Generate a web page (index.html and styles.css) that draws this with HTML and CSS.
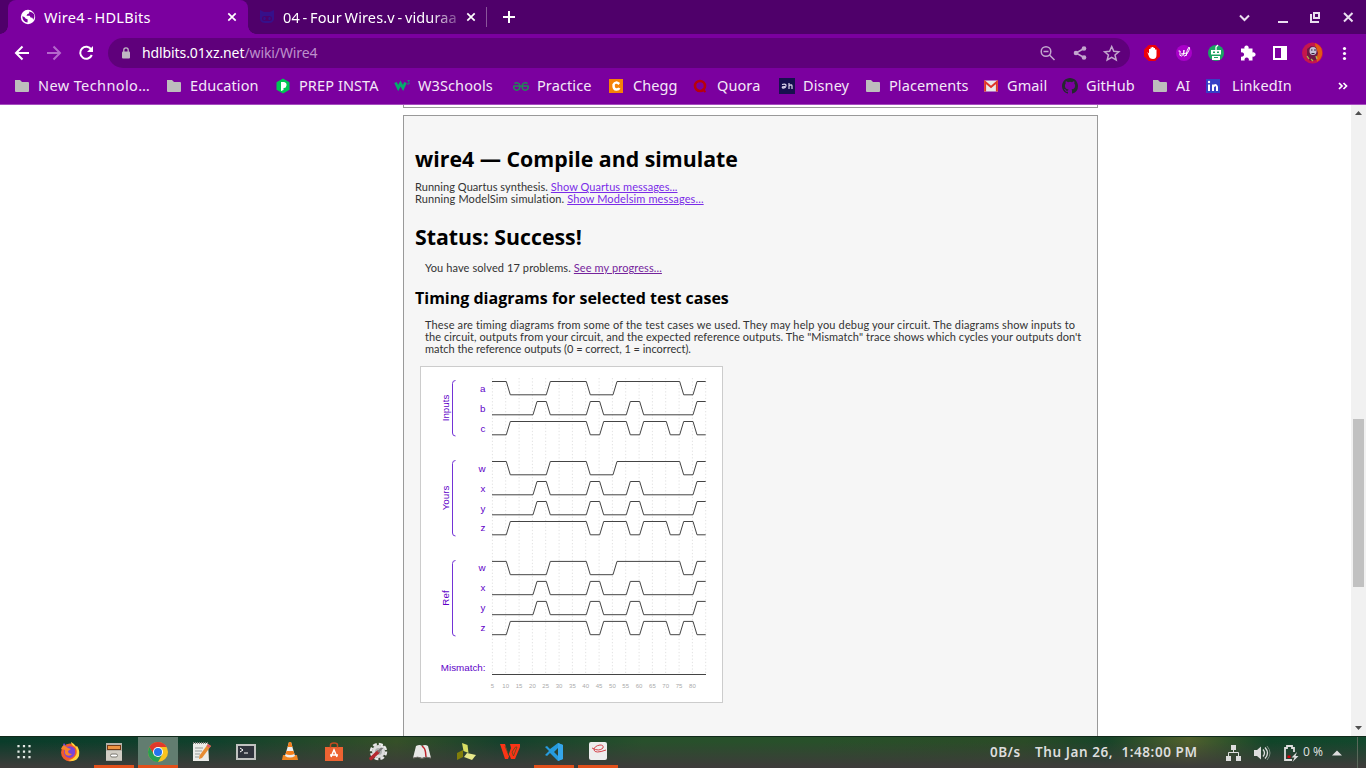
FILE: index.html
```html
<!DOCTYPE html>
<html lang="en">
<head>
<meta charset="utf-8">
<title>Wire4 - HDLBits</title>
<link rel="stylesheet" href="styles.css">
</head>
<body>
<svg width="0" height="0" class="defs">
  <defs>
    <symbol id="folder" viewBox="0 0 16 16"><path d="M1 2h5l2 2h6q1 0 1 1v8q0 1-1 1H2q-1 0-1-1z" fill="#bdbdbd"/></symbol>
    <symbol id="close" viewBox="0 0 10 10"><path d="M1.300 1.300l7.400 7.400M8.700 1.300L1.300 8.700" stroke="#fff" stroke-width="1.700"/></symbol>
    <path id="sigA" d="M0 0H14.300L18.300 13.300H54.300L58.300 0H94.300L98.300 13.300H121L125 0H187.700L191.700 13.300H201L205 0H213.700"/>
    <path id="sigB" d="M0 13.300H41L45 0H54.300L58.300 13.300H94.300L98.300 0H107.700L111.700 13.300H134.300L138.300 0H147.700L151.700 13.300H201L205 0H213.700"/>
    <path id="sigC" d="M0 13.300H14.300L18.300 0H94.300L98.300 13.300H107.700L111.700 0H134.300L138.300 13.300H147.700L151.700 0H174.300L178.300 13.300H187.700L191.700 0H201L205 13.300H213.700"/>
  </defs>
</svg>
<div class="screen">
  <header class="tabs">
    <div class="tab active">
      <svg class="favicon" viewBox="0 0 16 16"><circle cx="8" cy="8" r="7.200" fill="#fff"/><path d="M2.200 7.200q2.800.5 3.300 2.200 1.400.2 2.200 1.200l-.2 2.900Q2.800 13 2.200 7.200zM9.200 2.500v1.700l-2 1-.7 1.600h3.200l.9 1.700 1.800.2.9 2q1.800-2.600.8-5.400Q12.800 2.900 9.200 2.500z" fill="#7b009f"/></svg>
      <span class="tabtitle t1">Wire4 - HDLBits</span>
      <svg class="x" viewBox="0 0 10 10"><use href="#close"/></svg>
    </div>
    <div class="tab">
      <svg class="favicon" viewBox="0 0 16 16"><path d="M1 1l4 2h6l4-2v5q1 8-5 8H6Q0 14 1 6z" fill="#36108a"/><rect x="3" y="7" width="10" height="5" rx="2.500" fill="#4c006c"/><ellipse cx="5.500" cy="9.500" rx="1.200" ry="1.800" fill="#36108a"/><ellipse cx="10.500" cy="9.500" rx="1.200" ry="1.800" fill="#36108a"/></svg>
      <span class="tabtitle t2">04 - Four Wires.v - viduraa</span>
      <svg class="x" viewBox="0 0 10 10"><use href="#close"/></svg>
    </div>
    <svg class="plus" viewBox="0 0 12 12"><path d="M6 0v12M0 6h12" stroke="#fff" stroke-width="2"/></svg>
    <svg class="winbtns" viewBox="0 0 120 20"><g fill="none" stroke="#eadff0" stroke-width="2"><path d="M5 6.500l4.500 4.500L14 6.500"/><path d="M43 13h10"/><path d="M79 4h5v5h-5zM76 5v8h8"/><path d="M109 4l8.500 8.500m0-8.500L109 12.500"/></g></svg>
  </header>
  <nav class="toolbar">
    <svg class="navbtns" viewBox="0 0 100 30"><g fill="none" stroke-width="2"><path d="M29 15H16m6.500-6.500L16 15l6.500 6.500" stroke="#fff"/><path d="M47 15h13m-6.500-6.500L60 15l-6.500 6.500" stroke="#b568cc"/><path d="M91.300 11.500A6 6 0 1 0 91.800 17" stroke="#fff"/></g><path d="M93 8v6h-6z" fill="#fff"/></svg>
    <div class="omnibox">
      <svg class="lock" viewBox="0 0 10 14"><rect x="1" y="5.500" width="8" height="7" rx="1" fill="#bfb6c3"/><path d="M2.800 6V4a2.200 2.200 0 0 1 4.400 0v2" fill="none" stroke="#bfb6c3" stroke-width="1.300"/></svg>
      <span class="url">hdlbits.01xz.net<i>/wiki/Wire4</i></span>
      <svg class="omniicons" viewBox="0 0 86 20"><g fill="none" stroke="#c3a6ce" stroke-width="1.500"><circle cx="8" cy="8.500" r="4.800"/><path d="M11.500 12l5 5M5.500 8.500h5"/><path d="M46 5.500l-8 4.500 8 4.500"/><path d="M73.700 3.500l2.100 4.700 5 .5-3.800 3.300 1.200 5-4.500-2.700-4.500 2.700 1.200-5-3.800-3.300 5-.5z"/></g><g fill="#c3a6ce"><circle cx="46" cy="5.500" r="2.300"/><circle cx="38" cy="10" r="2.300"/><circle cx="46" cy="14.500" r="2.300"/></g></svg>
    </div>
    <svg class="exts" viewBox="1130 38 236 30">
      <path d="M1148.700 45h6.600l4.700 4.700v6.600l-4.700 4.700h-6.600l-4.700-4.700v-6.600z" fill="#ed0008"/><path d="M1147.300 52l1.700 1.500V49h1.500v-1.500h1.500V47h1.500v1h1.500v1.500h1.500V55q0 4-3.500 4t-4.200-3z" fill="#fff"/>
      <circle cx="1184" cy="53" r="8" fill="#a900c9"/><path d="M1178.500 51q2.500-1 1.500 2t1.500 3q3-1 2.500-6-1 6 .5 6t3-3q3-5 1.500-6-2 2-3 9M1181 54l6-1" fill="none" stroke="#fff" stroke-width="1"/>
      <circle cx="1216" cy="53" r="8" fill="#1ba463"/><path d="M1211 50h10v4.500h-10zM1212 56h8v4h-8z" fill="#fff"/><path d="M1216 50v-3l2-2" fill="none" stroke="#fff" stroke-width="1.300"/><path d="M1213 51.500h2v1.500h-2zm4 0h2v1.500h-2zM1214 57h4v1h-4z" fill="#1ba463"/>
      <path d="M1241 48.500h3.500a2.200 2.200 0 1 1 4 0h4v4a2.200 2.200 0 1 1 0 4v4h-3.800a2.200 2.200 0 1 0-4 0H1241v-4a2.200 2.200 0 1 0 0-4z" fill="#fff"/>
      <rect x="1274" y="47" width="12" height="12" fill="none" stroke="#fff" stroke-width="2"/><path d="M1281 46h6v14h-6z" fill="#fff"/>
      <circle cx="1312.500" cy="53" r="10.500" fill="#c5164d"/><path d="M1315 43q8 3 7 12-1 4-5 7z" fill="#e15a16"/><path d="M1307 49l4-3 5 1 2 6-2 7-6 1-3-5z" fill="#6f1746"/><ellipse cx="1313" cy="51" rx="3.500" ry="4" fill="#c7c1d6"/><path d="M1311 50h1.500m1.500 0h2M1311.500 53.500h3" stroke="#32213b" stroke-width="1.200"/><path d="M1307 56l2 3m2 0l2 2m3-5l1 3" stroke="#a9b94b" stroke-width="1.300"/>
      <g fill="#fff"><circle cx="1344.500" cy="48.500" r="1.600"/><circle cx="1344.500" cy="53.500" r="1.600"/><circle cx="1344.500" cy="58.500" r="1.600"/></g>
    </svg>
  </nav>
  <nav class="bookmarks">
    <a><svg viewBox="0 0 16 16"><use href="#folder"/></svg><span class="wide">New Technolo…</span></a>
    <a><svg viewBox="0 0 16 16"><use href="#folder"/></svg><span>Education</span></a>
    <a><svg viewBox="0 0 16 16"><path d="M8 .5l6.500 3.700v7.600L8 15.500l-6.500-3.700V4.200z" fill="#00c653"/><path d="M6 4h3q3 .5 2.500 3.500T8.500 10v2L6 13z" fill="#fff"/></svg><span>PREP INSTA</span></a>
    <a><svg viewBox="0 0 16 16"><path d="M1.500 4.500l2.700 5.500 2.300-4.500 2.500 4.500L11.500 4.500" fill="none" stroke="#04aa6d" stroke-width="2.800"/><path d="M13.500 2.500h2L14.300 4q1.700.5.700 2h-2" fill="none" stroke="#04aa6d" stroke-width=".8"/></svg><span>W3Schools</span></a>
    <a><svg viewBox="0 0 16 16"><path d="M.5 8H15.500M6.500 8a3 3 0 1 1-5.500 0M1.500 5.500Q5 3.500 6.800 7M9.500 8a3 3 0 1 0 5.500 0M14.500 5.500Q11 3.500 9.200 7" fill="none" stroke="#218a57" stroke-width="1.500"/></svg><span>Practice</span></a>
    <a><svg viewBox="0 0 16 16"><path d="M0 1h14v14H0z" fill="#f58307"/><path d="M10.300 6Q6.500 3 4.600 6.500q-.5 5 3 5 2 0 2.700-1.500" fill="none" stroke="#fff" stroke-width="2.500"/></svg><span>Chegg</span></a>
    <a><svg viewBox="0 0 16 16"><circle cx="7" cy="8" r="5" fill="none" stroke="#b9000a" stroke-width="2.600"/><path d="M9 11l3.500 3" stroke="#b9000a" stroke-width="2"/></svg><span>Quora</span></a>
    <a><svg viewBox="0 0 16 16"><path d="M0 0h16v16H0z" fill="#17104f"/><path d="M3 6.500q4.500-1 4 1.500T3.500 10q-1-1.500 2.500-1.500M10 5v6m0-3.500q3-1.500 3 .5v3" fill="none" stroke="#ddd7ed" stroke-width="1.200"/></svg><span>Disney</span></a>
    <a><svg viewBox="0 0 16 16"><use href="#folder"/></svg><span>Placements</span></a>
    <a><svg viewBox="0 0 16 16"><path d="M1 2.500h14v11H1z" fill="#e8e8e8"/><path d="M2.100 13.500V4l5.900 5 5.900-5v9.500" fill="none" stroke="#e03528" stroke-width="2"/></svg><span>Gmail</span></a>
    <a><svg viewBox="0 0 16 16"><path fill="#24292e" d="M8 0C3.580 0 0 3.580 0 8c0 3.540 2.290 6.530 5.470 7.590.4.070.55-.17.55-.38 0-.19-.01-.82-.01-1.490-2.010.37-2.530-.49-2.690-.94-.09-.23-.48-.94-.82-1.130-.28-.15-.68-.52-.01-.53.63-.01 1.080.58 1.230.82.72 1.210 1.870.87 2.330.66.070-.52.28-.87.51-1.070-1.780-.2-3.640-.89-3.640-3.950 0-.87.31-1.590.82-2.150-.08-.2-.36-1.020.08-2.120 0 0 .67-.21 2.200.82a7.600 7.600 0 0 1 4 0c1.530-1.040 2.200-.82 2.200-.82.44 1.100.16 1.920.08 2.120.51.56.82 1.270.82 2.150 0 3.070-1.870 3.750-3.650 3.950.29.25.54.73.54 1.480 0 1.070-.01 1.930-.01 2.200 0 .21.15.46.55.38A8 8 0 0 0 16 8c0-4.420-3.580-8-8-8z"/></svg><span>GitHub</span></a>
    <a><svg viewBox="0 0 16 16"><use href="#folder"/></svg><span>AI</span></a>
    <a><svg viewBox="0 0 16 16"><path d="M1 1h14v14H1z" fill="#3640c5"/><path d="M4 6.500V13M8 6.500V13M8 9q3-4 4 0v4" fill="none" stroke="#fff" stroke-width="2"/><circle cx="4" cy="4" r="1.200" fill="#fff"/></svg><span>LinkedIn</span></a>
    <a class="more"><svg viewBox="0 0 16 16"><path d="M3 5l3 3-3 3M7.500 5l3 3-3 3" fill="none" stroke="#fff" stroke-width="1.700"/></svg></a>
  </nav>
  <div class="viewport">
    <main>
      <div class="prevbox"></div>
      <section class="results">
        <h1>wire4 — Compile and simulate</h1>
        <p class="run"><span class="r1">Running Quartus synthesis. <a>Show Quartus messages...</a></span><br><span class="r2">Running ModelSim simulation. <a>Show Modelsim messages...</a></span></p>
        <h1 class="status">Status: Success!</h1>
        <p class="solved"><span class="r3">You have solved 17 problems. <a class="visited">See my progress...</a></span></p>
        <h2>Timing diagrams for selected test cases</h2>
        <p class="about"><span class="r4">These are timing diagrams from some of the test cases we used. They may help you debug your circuit. The diagrams show inputs to</span><br><span class="r5">the circuit, outputs from your circuit, and the expected reference outputs. The "Mismatch" trace shows which cycles your outputs don't</span><br><span class="r6">match the reference outputs (0 = correct, 1 = incorrect).</span></p>
        <div class="diagram">
          <svg width="301" height="335" viewBox="421 367 301 335">
            <path class="grid" d="M492.400 378V674M505.700 378V674M519.100 378V674M532.400 378V674M545.700 378V674M559.100 378V674M572.400 378V674M585.700 378V674M599.100 378V674M612.400 378V674M625.700 378V674M639.100 378V674M652.400 378V674M665.700 378V674M679.100 378V674M692.400 378V674M705.700 378V674"/>
            <g class="sig">
              <use href="#sigA" x="492" y="381.500"/><use href="#sigB" x="492" y="401.500"/><use href="#sigC" x="492" y="421.500"/>
              <use href="#sigA" x="492" y="461.500"/><use href="#sigB" x="492" y="481.500"/><use href="#sigB" x="492" y="501.500"/><use href="#sigC" x="492" y="521.500"/>
              <use href="#sigA" x="492" y="561.400"/><use href="#sigB" x="492" y="581.400"/><use href="#sigB" x="492" y="601.400"/><use href="#sigC" x="492" y="621.400"/>
              <path d="M492 674.500H706"/>
            </g>
            <path class="bracket" d="M455.500 380.500Q452.500 380.500 452.500 383.500V433Q452.500 436 455.500 436M455.500 460.500Q452.500 460.500 452.500 463.500V533Q452.500 536 455.500 536M455.500 560.500Q452.500 560.500 452.500 563.500V633Q452.500 636 455.500 636"/>
            <g class="lab">
              <text x="485.500" y="392">a</text><text x="485.500" y="412">b</text><text x="485.500" y="432">c</text>
              <text x="485.500" y="472">w</text><text x="485.500" y="492">x</text><text x="485.500" y="512">y</text><text x="485.500" y="531">z</text>
              <text x="485.500" y="571">w</text><text x="485.500" y="591">x</text><text x="485.500" y="611">y</text><text x="485.500" y="631">z</text>
              <text x="485.500" y="671">Mismatch:</text>
            </g>
            <g class="side"><text transform="translate(449 408) rotate(-90)">Inputs</text><text transform="translate(449 498) rotate(-90)">Yours</text><text transform="translate(449 598) rotate(-90)">Ref</text></g>
            <g class="ticks"><text x="492.400" y="688">5</text><text x="505.700" y="688">10</text><text x="519.100" y="688">15</text><text x="532.400" y="688">20</text><text x="545.700" y="688">25</text><text x="559.100" y="688">30</text><text x="572.400" y="688">35</text><text x="585.700" y="688">40</text><text x="599.100" y="688">45</text><text x="612.400" y="688">50</text><text x="625.700" y="688">55</text><text x="639.100" y="688">60</text><text x="652.400" y="688">65</text><text x="665.700" y="688">70</text><text x="679.100" y="688">75</text><text x="692.400" y="688">80</text></g>
          </svg>
        </div>
      </section>
    </main>
    <div class="scrollbar">
      <svg viewBox="0 0 15 17"><path d="M4 10l3.500-4L11 10z" fill="#505050"/></svg>
      <div class="thumb"></div>
      <svg viewBox="0 0 15 17"><path d="M4 7l3.500 4L11 7z" fill="#505050"/></svg>
    </div>
  </div>
  <footer class="taskbar">
    <div class="apps">
      <a><svg viewBox="0 0 24 24"><path d="M6.500 5v13.500M12 5v13.500M17.500 5v13.500" stroke="#e4ebe6" stroke-width="2.200" stroke-dasharray="2.200 3.300"/></svg></a>
      <a class="first"><svg viewBox="0 0 24 24"><circle cx="12" cy="12.500" r="9" fill="#f25a2c"/><path d="M13 2q0 3 4 5 3 4 1 8-3 5-8 5 8 3 11-4 1-6-2-10-1 1-1 1-1-3-5-5z" fill="#ffd43b"/><path d="M5 5l1-2 3 4q5-2 8 2 1 8-5 9-6-1-6-6l1-4z" fill="#7a45d6"/><path d="M3 9q1-3 3-4l4 3 3 1-3 2q0 3 4 3-2 3-6 1-2-2-1-5z" fill="#f9842b"/></svg></a>
      <a class="open"><svg viewBox="0 0 24 24"><path d="M4 3h16v18H4z" fill="#b5b2aa"/><path d="M5 5h14v5H5z" fill="#763b15"/><path d="M6 6h12v3H6z" fill="#ee9442"/><path d="M4 11h16v9H4z" fill="#d1cec5"/><rect x="8.500" y="14" width="7" height="3" rx="1.500" fill="#fff" stroke="#79776f"/></svg></a>
      <a class="open focus"><svg viewBox="0 0 24 24"><circle cx="12" cy="12" r="10" fill="#f9c31f"/><path d="M3.340 7A10 10 0 0 1 20.660 7H12L7.700 14.500z" fill="#e0392c"/><path d="M3.340 7A10 10 0 0 0 12 22l4.330-7.500L8 14.500z" fill="#279f52"/><circle cx="12" cy="12" r="5" fill="#fff"/><circle cx="12" cy="12" r="4" fill="#2474ed"/></svg></a>
      <a><svg viewBox="0 0 24 24"><path d="M3 3h15l1 18H3z" fill="#ecece8"/><path d="M3 3h15" stroke="#7d807b" stroke-width="2" stroke-dasharray="1 1"/><path d="M5 8h8M5 11h7M5 14h5M5 17h4" stroke="#979b98"/><path d="M18 4l3 2-9 12-3 1 .5-3.500z" fill="#e78c32"/><path d="M18 4l3 2-1.500 2-3-2z" fill="#dc5a66"/></svg></a>
      <a><svg viewBox="0 0 24 24"><path d="M2 4h20v16H2z" fill="#c0c2c0"/><path d="M4 6h16v12H4z" fill="#30343d"/><path d="M6 8l3 2-3 2M10 13h4" fill="none" stroke="#fff"/></svg></a>
      <a><svg viewBox="0 0 24 24"><path d="M5 15h14l1 5H4z" fill="#ef8420"/><path d="M11 2h2l4 14q-5 3-10 0z" fill="#eee"/><path d="M11 2h2l1.500 5h-5zM8.500 11h7l1 3q-4.500 2-9 0z" fill="#f57e19"/></svg></a>
      <a><svg viewBox="0 0 24 24"><path d="M3 7h18v14H3z" fill="#ed6332"/><path d="M8.500 7.500V5q0-2 3.500-2t3.500 2v2.500" fill="none" stroke="#c44a20" stroke-width="1.500"/><path d="M9 17l3-7 3 7M8 15h8" fill="none" stroke="#fff" stroke-width="1.500"/></svg></a>
      <a><svg viewBox="0 0 24 24"><circle cx="12.500" cy="11.500" r="6.500" fill="#ddd"/><circle cx="12.500" cy="11.500" r="7.500" fill="none" stroke="#e8e8e8" stroke-width="2.500" stroke-dasharray="3.900 2"/><circle cx="12.500" cy="11.500" r="3.500" fill="#adb2b0"/><path d="M5 18.500l7-6.500" stroke="#b52930" stroke-width="3.500" stroke-linecap="round"/><path d="M12 12l6-6" stroke="#777" stroke-width="2"/><path d="M16 4v3h3" fill="none" stroke="#f4f4f4" stroke-width="1.500"/></svg></a>
      <a><svg viewBox="0 0 24 24"><path d="M6 6q4-2 6 0 3-2 6 0l3 12q-5-2-9 0-4-2-9 0z" fill="#e8e8e6"/><path d="M12 6q3 2 3.500 6l.5 5" fill="none" stroke="#bd252b" stroke-width="1.500"/><path d="M3 18q5-2 9 .5 4-2.500 9-.5" fill="none" stroke="#77726d"/></svg></a>
      <a><svg viewBox="0 0 24 24"><path d="M8 3l5.500 2 1 8-5-2z" fill="#d8df63"/><path d="M3 20V13l6-3v7z" fill="#817e0a"/><path d="M13 13l9 2-4 5-8-3z" fill="#e8e98b"/></svg></a>
      <a><svg viewBox="0 0 24 24"><path d="M2 4h5l3.500 11 2.500-7-1-4h10v3L17 19h-4l-1.500-4-1.500 4H7z" fill="#fa3416"/><path d="M17.500 7h1.500l-3.500 9-1.500-4zM7 6l4 10" fill="none" stroke="#40501f" stroke-width=".7"/></svg></a>
      <a class="open"><svg viewBox="0 0 24 24"><path d="M16 3l5 2v14l-5 2-8-8-3 3-2-1 4-4-4-4 2-1 3 3zM16 8l-4 4 4 4z" fill="#269bdd"/><path d="M16 3l5 2v14l-5 2z" fill="#35a6ea"/></svg></a>
      <a class="open"><svg viewBox="0 0 24 24"><rect x="3" y="2" width="18" height="18" rx="2" fill="#eee"/><path d="M6 8q7 4 11 0 1-3-3-3-6 1-6 5 1 4 12 0" fill="none" stroke="#d5434a" stroke-width="1"/></svg></a>
    </div>
    <span class="net">0B/s</span><span class="clock">Thu Jan 26, &nbsp;1:48:00 PM</span>
    <svg class="tray" viewBox="0 0 80 32"><g fill="#ddd"><path d="M9 8h5v5H9zM4 19h5v5H4zM14 19h5v5h-5z"/><path d="M6.500 20v-4.500h10V20m-5-7v3" fill="none" stroke="#ddd"/><path d="M32 13h3l4-3.500v13L35 19h-3z"/></g><path d="M41 12.500q3 3.500 0 7M43 10.500q5 5.500 0 11" fill="none" stroke="#ddd" stroke-width="1.300"/><path d="M45 9q6 7 0 14" fill="none" stroke="#7d8c81"/><path d="M70 23h-7V11h2V9h5v2h2v4" fill="none" stroke="#ddd" stroke-width="1.800"/><path d="M65.500 18.500h3v2.500h-3z" fill="#d9000b"/><path d="M75 15l-5.500 5.500h3l-2 4.500 6-6h-3z" fill="#ddd"/></svg>
    <span class="pct">0 %</span>
    <svg class="up" viewBox="0 0 10 6"><path d="M0 5.500l5-5 5 5z" fill="#ddd"/></svg>
    <div class="desktop"></div>
  </footer>
</div>
</body>
</html>
```
FILE: styles.css
```css
* { box-sizing: border-box; }
body { margin: 0; overflow: hidden; font-family: "Noto Sans", "Open Sans", sans-serif; background: #fff; }
.defs { position: absolute; }
svg { display: block; flex: none; }
span { white-space: nowrap; }
.screen { width: 1366px; height: 768px; display: flex; flex-direction: column; }

.tabs { height: 34px; background: radial-gradient(circle at 0 0, transparent 7.500px, #7b009f 8px) 0 26px / 8px 8px no-repeat, radial-gradient(circle at 8px 0, transparent 7.500px, #7b009f 8px) 248px 26px / 8px 8px no-repeat, #4f006a; display: flex; align-items: center; padding-left: 8px; }
.tab { width: 240px; height: 34px; display: flex; align-items: center; padding: 0 11px 0 12px; color: #fff; font-size: 14.500px; }
.tab.active { background: #7b009f; border-radius: 8px 8px 0 0; }
.tab + .tab { width: 239px; border-right: 1px solid #8a559b; height: 20px; padding-right: 10px; padding-left: 11px; }
.favicon { width: 16px; height: 16px; margin-right: 8px; }
.tabtitle { flex: 1; line-height: 20px; padding-bottom: 1px; }
.t1 { letter-spacing: .3px; word-spacing: -1.800px; }
.t2 { margin-right: 4px; letter-spacing: .13px; word-spacing: -1.200px; -webkit-mask-image: linear-gradient(90deg, #000 82%, rgba(0,0,0,.15)); mask-image: linear-gradient(90deg, #000 82%, rgba(0,0,0,.15)); }
.x { width: 10px; height: 10px; }
.plus { width: 12px; height: 12px; margin-left: 16px; }
.winbtns { width: 120px; height: 20px; margin: 3px 11px 0 auto; }

.toolbar { background: #7b009f; display: flex; padding-top: 4px; height: 36px; }
.navbtns { width: 100px; height: 30px; margin-right: 8px; }
.omnibox { width: 1022px; height: 30px; border-radius: 15px; background: #5f007b; display: flex; align-items: center; padding: 0 6px 0 13px; }
.lock { width: 10px; height: 14px; }
.url { flex: 1; margin-left: 11px; padding-bottom: 2px; color: #fff; font-size: 14px; letter-spacing: -.1px; }
.url i { font-style: normal; color: #bd90cb; }
.omniicons { width: 86px; height: 20px; }
.exts { width: 236px; height: 30px; }

.bookmarks { height: 35px; background: #7b009f; border-bottom: 1px solid #a64dbf; padding: 0 0 2px 14px; display: grid; grid-template-columns: 152px 109px 119px 119px 96px 84px 86px 86px 118px 79px 90px 53px 131px 30px; align-items: center; color: #f4e8f8; font-size: 14.500px; }
.bookmarks a { display: flex; align-items: center; gap: 8px; }
.bookmarks span { line-height: 20px; padding-bottom: 2px; letter-spacing: .1px; }
.bookmarks .wide { letter-spacing: .4px; }
.bookmarks a:nth-child(13) { gap: 11px; }
.bookmarks svg { width: 16px; height: 16px; }

.viewport { height: 631px; display: flex; overflow: hidden; }
main { width: 1351px; padding-left: 403px; }
.prevbox { width: 695px; height: 3px; border: 1px solid #999; border-top: 0; margin-bottom: 7px; }
.results { width: 695px; height: 640px; background: #f6f6f6; border: 1px solid #999; padding: 29px 11px; color: #333; font: 11px/12px Lato, sans-serif; }
h1, h2, p { margin: 0; }
h1, h2 { color: #000; font-family: "Open Sans", sans-serif; font-weight: 700; }
h1 { font-size: 21.300px; line-height: 28px; }
h2 { font-size: 16px; line-height: 22px; margin-top: 13px; }
.run { margin-top: 8px; }
.r1 { letter-spacing: .06px; }
.r2 { letter-spacing: .125px; }
.r3 { letter-spacing: .1px; }
.r4 { letter-spacing: .14px; }
.r5 { letter-spacing: .062px; }
.r6 { letter-spacing: -.03px; }
.status { margin-top: 18px; }
.solved { margin: 11px 0 0 10px; }
.about { margin: 10px 0 0 10px; }
.results a { color: #7a2be8; text-decoration: underline; }
.results a.visited { color: #75249c; }
.diagram { width: 303px; height: 337px; margin: 11px 0 0 5px; background: #fff; border: 1px solid #ccc; }
.grid { stroke: #e2e2e2; stroke-width: 1; stroke-dasharray: 1.300 2; fill: none; }
.sig { fill: none; stroke: #444; stroke-width: 1; }
.bracket { fill: none; stroke: #7333d6; stroke-width: 1; }
.lab, .side { font: 9.800px "Liberation Sans", sans-serif; fill: #6000c8; text-anchor: end; }
.side { text-anchor: middle; }
.ticks { font: 6px "Liberation Sans", sans-serif; fill: #aaa; text-anchor: middle; }

.scrollbar { width: 15px; background: #f1f1f1; display: flex; flex-direction: column; }
.scrollbar svg { width: 15px; height: 17px; }
.thumb { width: 11px; height: 168px; background: #c1c1c1; margin: 297px 2px auto; }

.taskbar { height: 32px; display: flex; align-items: center; border-top: 1px solid #10291a; background: linear-gradient(180deg, rgba(60,60,58,0) 15%, #3d3c3a 95%), linear-gradient(90deg, #0a3c2a, #11412c 16%, #355028 29%, #14402c 37%, #28502c 47%, #28502a 60%, #2b4b27 75%, #174429 81%, #50602d 87%, #104529 93%, #13482d); color: #ddd; font-weight: 600; font-size: 13.500px; }
.apps { display: flex; gap: 4px; padding-left: 4px; width: 990px; }
.apps a { width: 40px; height: 31px; display: flex; align-items: center; justify-content: center; border-bottom: 3px solid transparent; padding-top: 2px; }
.apps .first { margin-left: 2px; }
.apps svg { width: 24px; height: 24px; }
.apps a.open { border-color: #e2501b; }
.apps a.focus { background: #627d70; }
.net, .clock, .pct { padding-bottom: 2px; }
.net { width: 45px; letter-spacing: .5px; }
.clock { width: 187px; letter-spacing: .58px; }
.tray { width: 80px; height: 32px; }
.pct { width: 29px; margin-left: 1px; font-size: 12px; font-weight: 400; }
.up { width: 10px; height: 6px; }
.desktop { width: 1px; height: 31px; background: #59685a; margin-left: 15px; }
```
